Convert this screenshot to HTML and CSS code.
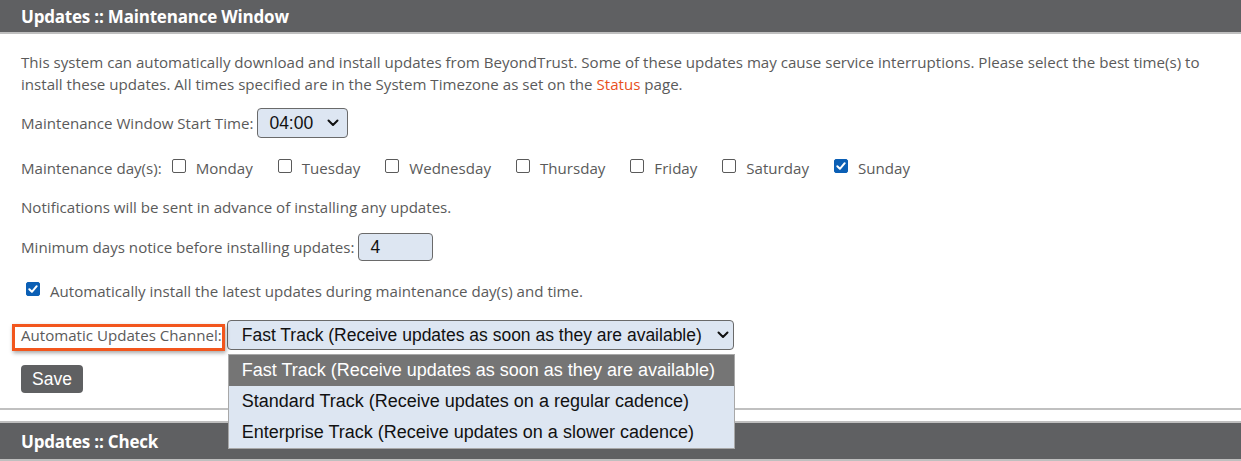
FILE: index.html
```html
<!DOCTYPE html>
<html>
<head>
<meta charset="utf-8">
<link rel="stylesheet" href="styles.css">
</head>
<body>
<div class="panel-head"><h2>Updates :: Maintenance Window</h2></div>
<div class="panel-body">
  <p class="intro">This system can automatically download and install updates from BeyondTrust. Some of these updates may cause service interruptions. Please select the best time(s) to install these updates. All times specified are in the System Timezone as set on the <a href="#">Status</a> page.</p>

  <div class="row row-time">
    <span>Maintenance Window Start Time:</span>
    <div class="select select-time"><span>04:00</span><svg class="chev" width="12" height="8" viewBox="0 0 12 8"><path d="M1.5 1.5 L6 6 L10.5 1.5" fill="none" stroke="#111" stroke-width="2" stroke-linecap="round" stroke-linejoin="round"/></svg></div>
  </div>

  <div class="row row-days">
    <span class="days-label">Maintenance day(s):</span>
    <label class="day"><span class="cb"></span>Monday</label>
    <label class="day"><span class="cb"></span>Tuesday</label>
    <label class="day"><span class="cb"></span>Wednesday</label>
    <label class="day"><span class="cb"></span>Thursday</label>
    <label class="day"><span class="cb"></span>Friday</label>
    <label class="day"><span class="cb"></span>Saturday</label>
    <label class="day"><span class="cb checked"><svg width="14" height="14" viewBox="0 0 14 14"><path d="M3.3 7.2 L5.9 9.8 L10.7 4.2" fill="none" stroke="#fff" stroke-width="2" stroke-linecap="round" stroke-linejoin="round"/></svg></span>Sunday</label>
  </div>

  <div class="row row-note">Notifications will be sent in advance of installing any updates.</div>

  <div class="row row-min">
    <span>Minimum days notice before installing updates:</span>
    <div class="input-num">4</div>
  </div>

  <div class="row row-auto">
    <span class="cb checked"><svg width="14" height="14" viewBox="0 0 14 14"><path d="M3.3 7.2 L5.9 9.8 L10.7 4.2" fill="none" stroke="#fff" stroke-width="2" stroke-linecap="round" stroke-linejoin="round"/></svg></span>
    <span>Automatically install the latest updates during maintenance day(s) and time.</span>
  </div>

  <div class="row row-channel">
    <span class="channel-label">Automatic Updates Channel:</span>
    <div class="channel-wrap">
      <div class="select select-channel"><span>Fast Track (Receive updates as soon as they are available)</span><svg class="chev" width="12" height="8" viewBox="0 0 12 8"><path d="M1.5 1.5 L6 6 L10.5 1.5" fill="none" stroke="#111" stroke-width="2" stroke-linecap="round" stroke-linejoin="round"/></svg></div>
      <ul class="dropdown">
        <li class="active">Fast Track (Receive updates as soon as they are available)</li>
        <li>Standard Track (Receive updates on a regular cadence)</li>
        <li>Enterprise Track (Receive updates on a slower cadence)</li>
      </ul>
    </div>
  </div>

  <div class="row row-save"><button class="btn-save">Save</button></div>
</div>
<div class="divider"></div>
<div class="panel-head panel-head-2"><h2>Updates :: Check</h2></div>
</body>
</html>
```
FILE: styles.css
```css
html, body {
  margin: 0;
  padding: 0;
  background: #fff;
}
body {
  font-family: "Open Sans", "Noto Sans", sans-serif;
  font-size: 15.1px;
  color: #5a5a5a;
  overflow: hidden;
  height: 461px;
}
.panel-head {
  background: #5f6062;
  height: 32px;
  border-bottom: 2px solid #bfbfbf;
  display: flex;
  align-items: center;
  padding-left: 21px;
}
.panel-head h2 {
  margin: 0;
  color: #fff;
  font-size: 17px;
  font-weight: 700;
  letter-spacing: -0.2px;
}
.panel-body {
  padding: 17px 21px 0 21px;
}
.intro {
  margin: 0;
  line-height: 22px;
}
.intro a {
  color: #e8501d;
  text-decoration: none;
}
.row {
  display: flex;
  align-items: center;
}
.row-time {
  margin-top: 13px;
  height: 30px;
}
.select {
  background: #dde6f2;
  border: 1px solid #6a6a6a;
  border-radius: 4px;
  box-sizing: border-box;
  height: 30px;
  display: flex;
  align-items: center;
  justify-content: space-between;
  font-family: "Liberation Sans", Arial, sans-serif;
  font-size: 17.5px;
  color: #111;
}
.select-time {
  width: 91px;
  margin-left: 4px;
  padding: 0 8px 0 11px;
}
.chev {
  flex: none;
}
.row-days {
  margin-top: 15px;
  height: 30px;
}
.days-label {
  margin-right: 10px;
}
.day {
  display: flex;
  align-items: center;
  margin-right: 25px;
}
.cb {
  width: 14px;
  height: 14px;
  box-sizing: border-box;
  border: 1px solid #5a5a5a;
  border-radius: 2px;
  margin-right: 10px;
  display: inline-flex;
  flex: none;
  position: relative;
  top: -2px;
}
.cb.checked {
  background: #0b5fb5;
  border-color: #0b5fb5;
}
.cb.checked svg {
  position: absolute;
  left: -1px;
  top: -1px;
}
.row-note {
  margin-top: 9px;
  height: 30px;
}
.row-min {
  margin-top: 10px;
  height: 30px;
}
.input-num {
  margin-left: 4px;
  width: 75px;
  height: 28px;
  box-sizing: border-box;
  background: #dde6f2;
  border: 1px solid #6a6a6a;
  border-radius: 4px;
  font-family: "Liberation Sans", Arial, sans-serif;
  font-size: 17.5px;
  color: #111;
  padding-left: 11px;
  display: flex;
  align-items: center;
}
.row-auto {
  margin-top: 14px;
  height: 30px;
  padding-left: 5px;
}
.row-auto .cb {
  margin-right: 10px;
}
.row-channel {
  margin-top: 14px;
  height: 30px;
}
.channel-label {
  position: relative;
  z-index: 1;
}
.channel-label::after {
  content: "";
  position: absolute;
  left: -9px;
  right: -3px;
  top: -1px;
  bottom: -6px;
  border: 3px solid #f2561d;
  box-shadow: 1px 2px 4px rgba(0,0,0,0.35);
}
.channel-wrap {
  position: relative;
  margin-left: 5px;
}
.select-channel {
  width: 507px;
  padding: 0 4px 0 14px;
}
.dropdown {
  position: absolute;
  left: 1px;
  top: 34px;
  width: 507px;
  margin: 0;
  padding: 0;
  list-style: none;
  background: #dde6f2;
  border: 1px solid #a8a8a8;
  box-sizing: border-box;
  font-family: "Liberation Sans", Arial, sans-serif;
  font-size: 18px;
  color: #111;
  z-index: 5;
}
.dropdown li {
  height: 31px;
  line-height: 31px;
  padding-left: 13px;
}
.dropdown li.active {
  background: #757575;
  color: #fff;
}
.row-save {
  margin-top: 15px;
}
.btn-save {
  background: #5f6062;
  color: #fff;
  border: none;
  border-radius: 4px;
  width: 62px;
  height: 28px;
  font-family: "Liberation Sans", Arial, sans-serif;
  font-size: 17.5px;
  padding: 0;
}
.divider {
  margin-top: 15px;
  height: 2px;
  background: #c0c0c0;
}
.panel-head-2 {
  margin-top: 11px;
  border-top: 2px solid #bfbfbf;
  height: 36px;
  border-bottom: 2px solid #bfbfbf;
}
```
